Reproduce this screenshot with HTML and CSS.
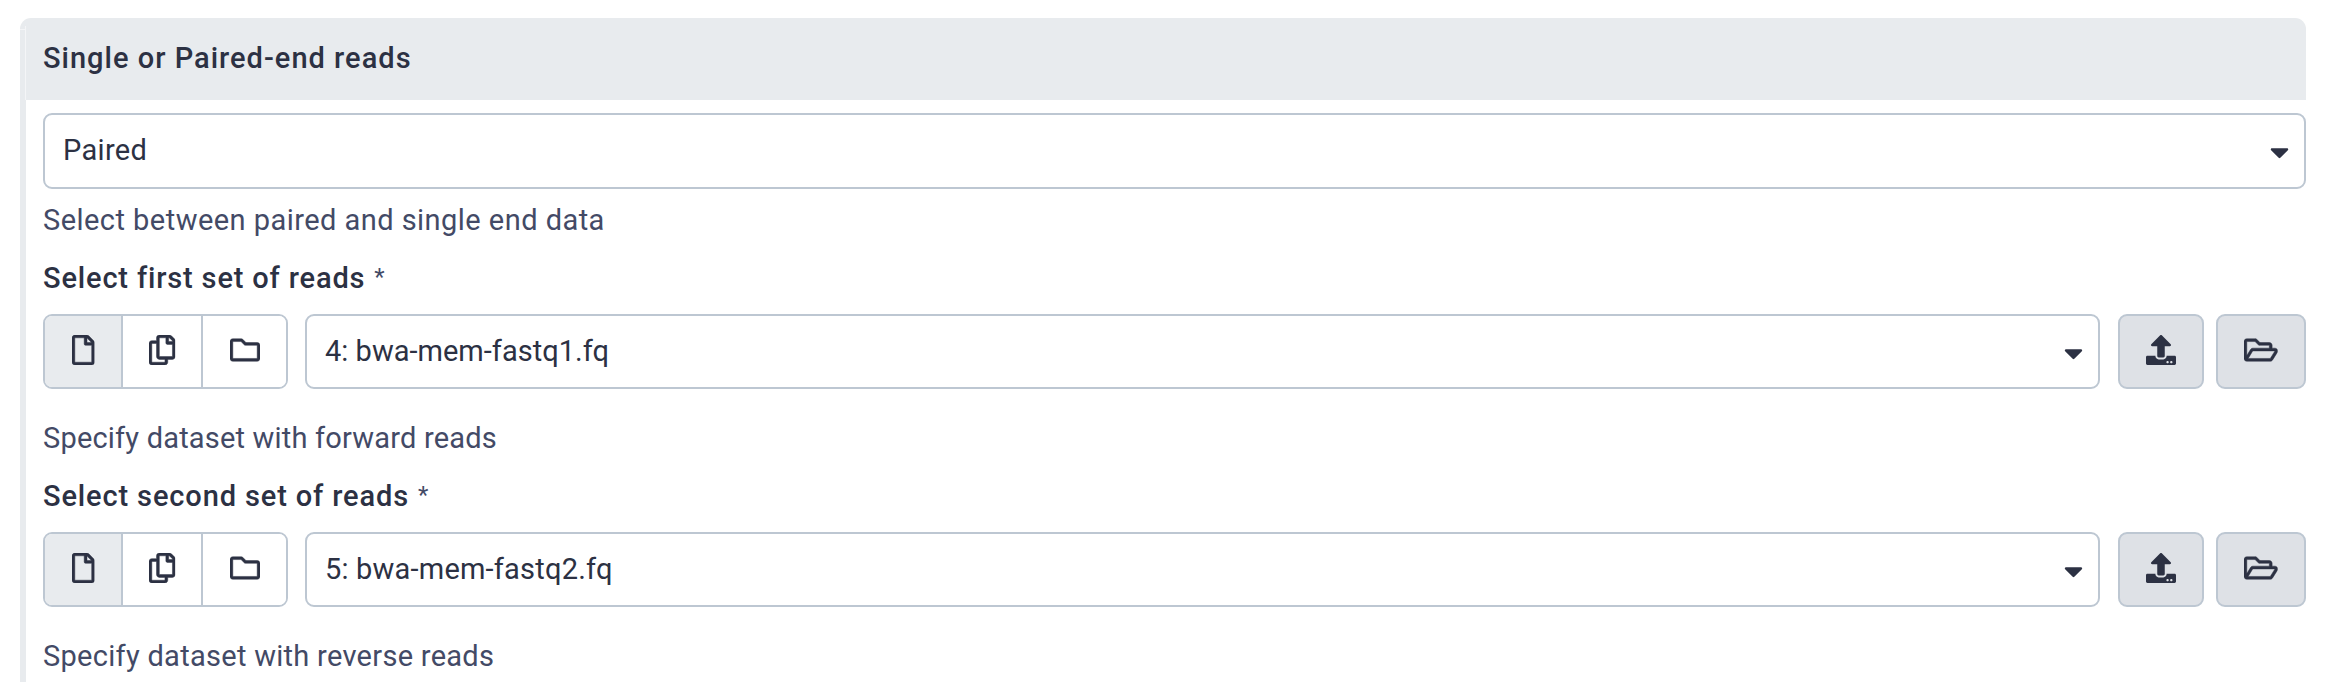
FILE: index.html
```html
<!DOCTYPE html>
<html lang="en">
<head>
<meta charset="utf-8">
<title>Single or Paired-end reads</title>
<link rel="stylesheet" href="styles.css">
</head>
<body>
<svg class="sprite" width="0" height="0">
  <symbol id="file" viewBox="0 0 384 512"><path d="M369.9 97.9L286 14C277 5 264.8-.1 252.1-.1H48C21.5 0 0 21.5 0 48v416c0 26.500 21.500 48 48 48h288c26.500 0 48-21.500 48-48V131.900c0-12.700-5.100-25-14.100-34zM332.100 128H256V51.900l76.100 76.100zM48 464V48h160v104c0 13.300 10.700 24 24 24h104v288H48z"/></symbol>
  <symbol id="copy" viewBox="0 0 448 512"><path d="M433.941 65.941l-51.882-51.882A48 48 0 0 0 348.118 0H176c-26.510 0-48 21.490-48 48v48H48c-26.510 0-48 21.490-48 48v320c0 26.510 21.490 48 48 48h224c26.510 0 48-21.490 48-48v-48h80c26.510 0 48-21.490 48-48V99.882a48 48 0 0 0-14.059-33.941zM266 464H54a6 6 0 0 1-6-6V150a6 6 0 0 1 6-6h74v224c0 26.510 21.490 48 48 48h96v42a6 6 0 0 1-6 6zm128-96H182a6 6 0 0 1-6-6V54a6 6 0 0 1 6-6h106v88c0 13.255 10.745 24 24 24h88v202a6 6 0 0 1-6 6zm6-256h-64V48h9.632c1.591 0 3.117.632 4.243 1.757l48.368 48.368a6 6 0 0 1 1.757 4.243V112z"/></symbol>
  <symbol id="folder" viewBox="0 0 512 512"><path d="M464 128H272l-54.630-54.630c-6-6-14.140-9.370-22.630-9.370H48C21.490 64 0 85.490 0 112v288c0 26.510 21.490 48 48 48h416c26.510 0 48-21.490 48-48V176c0-26.510-21.490-48-48-48zm0 272H48V112h140.120l54.630 54.630c6 6 14.140 9.370 22.630 9.370H464v224z"/></symbol>
  <symbol id="folder-open" viewBox="0 0 576 512"><path d="M527.900 224H480v-48c0-26.500-21.500-48-48-48H272l-64-64H48C21.500 64 0 85.500 0 112v288c0 26.500 21.500 48 48 48h400c16.500 0 31.900-8.500 40.700-22.600l79.900-128c20-31.900-3-73.400-40.700-73.400zM48 118c0-3.300 2.700-6 6-6h134.100l64 64H426c3.300 0 6 2.700 6 6v42H152c-16.800 0-32.400 8.800-41.100 23.200L48 351.400zm400 282H72l77.200-128H528z"/></symbol>
  <symbol id="upload" viewBox="0 0 512 512"><path d="M296 384h-80c-13.300 0-24-10.700-24-24V192h-87.700c-17.800 0-26.700-21.500-14.100-34.100L242.300 5.700c7.500-7.500 19.800-7.500 27.300 0l152.200 152.200c12.600 12.600 3.700 34.100-14.100 34.100H320v168c0 13.300-10.700 24-24 24zm216-8v112c0 13.300-10.700 24-24 24H24c-13.300 0-24-10.700-24-24V376c0-13.300 10.700-24 24-24h136v8c0 30.900 25.100 56 56 56h80c30.900 0 56-25.100 56-56v-8h136c13.300 0 24 10.700 24 24zm-124 88c0-11-9-20-20-20s-20 9-20 20 9 20 20 20 20-9 20-20zm64 0c0-11-9-20-20-20s-20 9-20 20 9 20 20 20 20-9 20-20z"/></symbol>
  <symbol id="caret" viewBox="0 0 320 512"><path d="M31.300 192h257.300c17.800 0 26.700 21.500 14.100 34.100L174.100 354.800c-7.800 7.800-20.500 7.800-28.300 0L17.200 226.100C4.600 213.500 13.500 192 31.300 192z"/></symbol>
</svg>
<section class="card">
  <header class="card-header"><span class="t-title">Single or Paired-end reads</span></header>
  <div class="card-body">
    <div class="select select-wide"><span class="t-paired">Paired</span><svg class="icon caret"><use href="#caret"/></svg></div>
    <div class="help help-top"><span class="t-help1">Select between paired and single end data</span></div>

    <div class="field">
      <div class="label"><span class="t-label1">Select first set of reads</span><span class="star">*</span></div>
      <div class="row">
        <div class="group">
          <button class="seg seg-file active"><svg class="icon w-file"><use href="#file"/></svg></button>
          <button class="seg seg-copy"><svg class="icon w-copy"><use href="#copy"/></svg></button>
          <button class="seg seg-folder"><svg class="icon w-folder"><use href="#folder"/></svg></button>
        </div>
        <div class="select"><span class="t-val1">4: bwa-mem-fastq1.fq</span><svg class="icon caret"><use href="#caret"/></svg></div>
        <div class="actions">
          <button class="btn btn-upload"><svg class="icon w-folder"><use href="#upload"/></svg></button>
          <button class="btn btn-open"><svg class="icon w-open"><use href="#folder-open"/></svg></button>
        </div>
      </div>
      <div class="help"><span class="t-help2">Specify dataset with forward reads</span></div>
    </div>

    <div class="field">
      <div class="label"><span class="t-label2">Select second set of reads</span><span class="star">*</span></div>
      <div class="row">
        <div class="group">
          <button class="seg seg-file active"><svg class="icon w-file"><use href="#file"/></svg></button>
          <button class="seg seg-copy"><svg class="icon w-copy"><use href="#copy"/></svg></button>
          <button class="seg seg-folder"><svg class="icon w-folder"><use href="#folder"/></svg></button>
        </div>
        <div class="select"><span class="t-val2">5: bwa-mem-fastq2.fq</span><svg class="icon caret"><use href="#caret"/></svg></div>
        <div class="actions">
          <button class="btn btn-upload"><svg class="icon w-folder"><use href="#upload"/></svg></button>
          <button class="btn btn-open"><svg class="icon w-open"><use href="#folder-open"/></svg></button>
        </div>
      </div>
      <div class="help"><span class="t-help3">Specify dataset with reverse reads</span></div>
    </div>
  </div>
</section>
</body>
</html>
```
FILE: styles.css
```css
* { box-sizing: border-box; }
body {
  margin: 0;
  padding: 18px 45px 0 20px;
  height: 688px;
  overflow: hidden;
  background: #fff;
  color: #2c3143;
  font-family: Roboto, "Liberation Sans", sans-serif;
  font-size: 29px;
  line-height: 40px;
}
.sprite { display: block; width: 0; height: 0; }
.card { height: 664px; border-radius: 11px 11px 0 0; overflow: hidden; }
.card-header {
  height: 82px;
  padding: 20px 0 0 23px;
  background:
    linear-gradient(#f4f5f7, #f4f5f7) 5px 8px / 1px 74px no-repeat,
    linear-gradient(#f4f5f7, #f4f5f7) 0 11px / 5px 1px no-repeat,
    #e8ebee;
  font-weight: 500;
}
.card-body {
  height: 582px;
  padding: 13px 0 0 17px;
  border-left: 6px solid #e8ebee;
}
.card span { white-space: nowrap; }
.t-title { letter-spacing: 1.01px; }
.t-paired { letter-spacing: 0.32px; }
.t-help1 { letter-spacing: 0.46px; }
.t-label1 { letter-spacing: 0.84px; }
.t-label2 { letter-spacing: 0.87px; }
.t-val1 { letter-spacing: 0.02px; }
.t-val2 { letter-spacing: 0.2px; }
.t-help2 { letter-spacing: 0.19px; }
.t-help3 { letter-spacing: 0.29px; }
.select {
  display: flex;
  flex: 1;
  align-items: center;
  justify-content: space-between;
  height: 75px;
  padding: 0 15px 2px 18px;
  border: 2px solid #bdc7d2;
  border-radius: 9px;
  background: #fff;
}
.select-wide { height: 76px; }
.icon { display: block; height: 30px; fill: #2c3143; overflow: visible; }
.seg .icon, .btn-open .icon { stroke: #2c3143; stroke-width: 8px; }
.caret { width: 19px; position: relative; top: 2px; }
.help { height: 40px; margin-top: 29px; color: #434a66; line-height: 38px; }
.help-top { margin-top: 12px; }
.label { display: flex; height: 40px; margin-top: 18px; font-weight: 500; line-height: 38px; }
.star { margin-left: 9px; color: #434a66; font-weight: 400; font-size: 24px; line-height: 36px; }
.row { display: flex; height: 76px; margin-top: 15px; align-items: flex-start; }
.group {
  display: flex;
  width: 245px;
  height: 75px;
  margin-right: 17px;
  border: 2px solid #bdc7d2;
  border-radius: 9px;
  overflow: hidden;
}
.seg, .btn {
  display: flex;
  align-items: center;
  justify-content: center;
  margin: 0;
  padding: 0 0 3px;
  border: 0;
  background: #fff;
}
.seg { height: 71px; border-right: 2px solid #bdc7d2; }
.seg-file { width: 78px; }
.seg-copy { width: 80px; }
.seg-folder { width: 83px; border-right: 0; }
.active { background: #e8ebee; }
.actions { display: flex; gap: 12px; margin-left: 18px; }
.btn { height: 75px; border: 2px solid #bdc7d2; border-radius: 9px; background: #dee1e6; }
.btn-upload { width: 86px; }
.btn-open { width: 90px; }
.w-file { width: 22.5px; }
.w-copy { width: 26.25px; }
.w-folder { width: 30px; }
.w-open { width: 33.75px; }
```
